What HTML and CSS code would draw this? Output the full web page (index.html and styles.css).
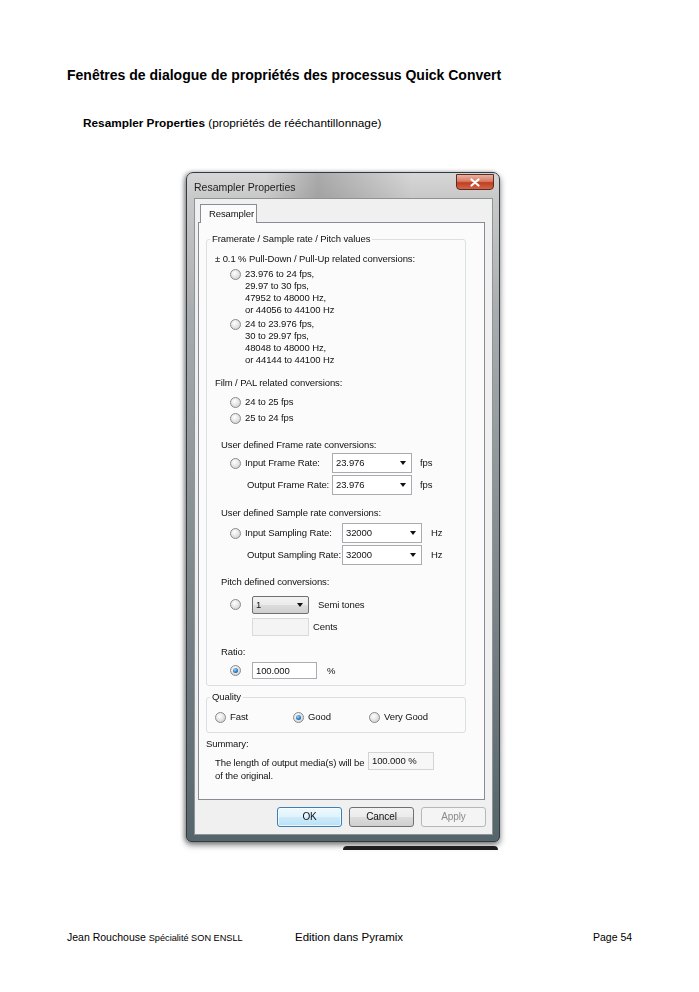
FILE: index.html
```html
<!DOCTYPE html>
<html lang="fr">
<head>
	<meta charset="UTF-8">
	<meta name="viewport" content="width=device-width, initial-scale=1.0">
	<title>Edition dans Pyramix - Page 54</title>
	<link rel="stylesheet" href="styles.css">
</head>
<body>
<div class="page">
	<h1 class="doc-title">Fenêtres de dialogue de propriétés des processus Quick Convert</h1>
	<p class="doc-sub"><b>Resampler Properties</b> (propriétés de rééchantillonnage)</p>

	<div class="shot">
		<div class="win">
			<div class="win-title">
				<span class="win-caption">Resampler Properties</span>
				<span class="win-close">
					<svg width="12" height="9" viewBox="0 0 12 9"><path d="M2.5 1.5 L9.5 7.5 M9.5 1.5 L2.5 7.5" stroke="#fff" stroke-width="2.2" stroke-linecap="round"/></svg>
				</span>
			</div>
			<div class="win-client">
				<div class="tabs"><span class="tab">Resampler</span></div>
				<div class="tab-panel">
					<fieldset class="group group-main">
						<legend>Framerate / Sample rate / Pitch values</legend>

						<div class="sub-head sh-pd">± 0.1 % Pull-Down / Pull-Up related conversions:</div>
						<div class="opt opt-multi o-first"><span class="radio"></span><span>23.976 to 24 fps,<br>29.97 to 30 fps,<br>47952 to 48000 Hz,<br>or 44056 to 44100 Hz</span></div>
						<div class="opt opt-multi o-second"><span class="radio"></span><span>24 to 23.976 fps,<br>30 to 29.97 fps,<br>48048 to 48000 Hz,<br>or 44144 to 44100 Hz</span></div>

						<div class="sub-head sh-film">Film / PAL related conversions:</div>
						<div class="opt o-film1"><span class="radio"></span>24 to 25 fps</div>
						<div class="opt o-film2"><span class="radio"></span>25 to 24 fps</div>

						<div class="sub-head indent sh-frame">User defined Frame rate conversions:</div>
						<div class="rate-row rr-in1"><span class="radio"></span><span class="lbl-frame">Input Frame Rate:</span><span class="combo">23.976</span><span class="unit">fps</span></div>
						<div class="rate-row rate-out rr-out1"><span class="lbl-frame-out">Output Frame Rate:</span><span class="combo">23.976</span><span class="unit">fps</span></div>

						<div class="sub-head indent sh-sample">User defined Sample rate conversions:</div>
						<div class="rate-row rr-in2"><span class="radio"></span><span class="lbl-rate">Input Sampling Rate:</span><span class="combo">32000</span><span class="unit unit-hz">Hz</span></div>
						<div class="rate-row rate-out rr-out2"><span class="lbl-rate-out">Output Sampling Rate:</span><span class="combo">32000</span><span class="unit unit-hz">Hz</span></div>

						<div class="sub-head indent sh-pitch">Pitch defined conversions:</div>
						<div class="pitch-row"><span class="radio"></span><span class="combo combo-btn">1</span><span class="pitch-unit">Semi tones</span></div>
						<div class="cents-row"><span class="field field-off"></span><span class="cents-unit">Cents</span></div>

						<div class="sub-head indent sh-ratio">Ratio:</div>
						<div class="ratio-row"><span class="radio checked"></span><span class="field field-ratio">100.000</span><span class="ratio-unit">%</span></div>
					</fieldset>

					<fieldset class="group group-quality">
						<legend>Quality</legend>
						<div class="quality-row">
							<span class="q-opt q-fast"><span class="radio"></span>Fast</span>
							<span class="q-opt q-good"><span class="radio checked"></span>Good</span>
							<span class="q-opt"><span class="radio"></span>Very Good</span>
						</div>
					</fieldset>

					<div class="summary-head">Summary:</div>
					<div class="summary-row">
						<div class="summary-text">The length of output media(s) will be<br>of the original.</div>
						<div class="field summary-box">100.000 %</div>
					</div>
				</div>

				<div class="buttons">
					<span class="btn btn-default">OK</span>
					<span class="btn">Cancel</span>
					<span class="btn btn-disabled">Apply</span>
				</div>
			</div>
		</div>
		<!-- top edge of the window underneath -->
		<div class="win-behind"></div>
	</div>

	<footer class="doc-foot">
		<span class="foot-author">Jean Rouchouse <small>Spécialité SON ENSLL</small></span>
		<span class="foot-title">Edition dans Pyramix</span>
		<span class="foot-page">Page 54</span>
	</footer>
</div>
</body>
</html>
```

FILE: styles.css
```css
* {
	box-sizing: border-box;
}
body {
	margin: 0;
	background: #fff;
	font-family: "Liberation Sans", Arial, sans-serif;
	color: #000;
}
.page {
	width: 699px;
}

/* document text */
.doc-title {
	margin: 67px 0 0 67px;
	font-size: 14px;
	line-height: 16px;
	font-weight: bold;
}
.doc-sub {
	margin: 33px 0 0 83px;
	font-size: 11.8px;
	line-height: 14px;
}
.doc-foot {
	display: grid;
	grid-template-columns: 228px 298px auto;
	align-items: baseline;
	margin: 80px 0 0 67px;
	line-height: 14px;
}
.foot-author {
	font-size: 10.5px;
}
.foot-author small {
	font-size: 9.2px;
}
.foot-title {
	font-size: 11.5px;
}
.foot-page {
	font-size: 10.5px;
}

/* screenshot of the dialog */
.shot {
	margin: 42px 0 0 186px;
	width: 314px;
	filter: blur(0.3px);
}
.win {
	border: 1px solid #2f3d43;
	border-radius: 7px 7px 5px 5px;
	padding: 0 6px 6px 7px;
	background:
		linear-gradient(to right, rgba(90, 90, 90, 0) 25%, rgba(90, 90, 90, 0.35) 42%, rgba(90, 90, 90, 0.2) 55%, rgba(90, 90, 90, 0) 72%) 0 0 / 100% 25px no-repeat,
		linear-gradient(#d6d6d6 0, #c9c9c9 24px, #a9acae 140px, #80888b 60%, #56656b 100%);
	box-shadow: 0 3px 6px rgba(0, 0, 0, 0.5), -2px 0 4px rgba(0, 0, 0, 0.25);
}
.win-title {
	display: flex;
	justify-content: space-between;
	height: 25px;
}
.win-caption {
	padding-top: 7px;
	font-size: 10.5px;
	line-height: 14px;
	color: #1c1c1c;
}
.win-close {
	display: flex;
	align-items: center;
	justify-content: center;
	width: 38px;
	height: 16px;
	margin: 1px -1px 0 0;
	border: 1px solid #5d2a1f;
	border-radius: 0 0 4px 4px;
	background: linear-gradient(#eab1a3 0, #d97b63 45%, #c23e22 55%, #d0654a 100%);
}
.win-client {
	background: #f0f0f0;
	border: 1px solid #8d9498;
	padding: 5px 7px 7px 3px;
	font-size: 9.5px;
	line-height: 12px;
	color: #111;
	white-space: nowrap;
	letter-spacing: -0.1px;
}

/* tab */
.tabs {
	display: flex;
	padding-left: 2px;
	position: relative;
	z-index: 1;
	margin-bottom: -1px;
}
.tab {
	width: 57px;
	height: 19px;
	padding: 3px 0 0 8px;
	border: 1px solid #898c95;
	border-bottom: none;
	background: #fbfbfb;
}
.tab-panel {
	border: 1px solid #898c95;
	background: #fbfbfb;
	padding: 10px 0 17px 7px;
}

/* group boxes */
.group {
	width: 260px;
	min-width: 0;
	margin: 0;
	padding: 0 0 5px;
	border: 1px solid #dadfe2;
	border-radius: 3px;
}
.group legend {
	margin-left: 3px;
	padding: 0 2px;
	line-height: 12px;
}
.group-quality {
	margin-top: 5px;
	padding-bottom: 9px;
}

.sub-head {
	padding-left: 8px;
}
.sub-head.indent {
	padding-left: 14px;
}
.sh-pd { margin-top: 8px; }
.sh-film { margin-top: 11px; }
.sh-frame { margin-top: 15px; }
.sh-sample { margin-top: 12px; }
.sh-pitch { margin-top: 11px; }
.sh-ratio { margin-top: 10px; }

/* radio buttons */
.radio {
	flex: none;
	position: relative;
	width: 11px;
	height: 11px;
	border: 1px solid #8a8a8a;
	border-radius: 50%;
	background: radial-gradient(circle at 40% 35%, #fff 0, #eaeaea 40%, #c8c8c8 100%);
}
.radio.checked::after {
	content: "";
	position: absolute;
	left: 2px;
	top: 2px;
	width: 5px;
	height: 5px;
	border-radius: 50%;
	background: radial-gradient(circle at 40% 35%, #9ad6ff 0, #2a7cc4 55%, #0b4a85 100%);
}

.opt {
	display: flex;
	align-items: center;
	gap: 4px;
	height: 12px;
	padding-left: 23px;
}
.opt-multi {
	align-items: flex-start;
	height: auto;
}
.opt-multi .radio {
	margin-top: 1px;
}
.o-first { margin-top: 3px; }
.o-second { margin-top: 2px; }
.o-film1 { margin-top: 7px; }
.o-film2 { margin-top: 4px; }

/* frame rate / sample rate rows */
.rate-row {
	display: flex;
	align-items: center;
	height: 20px;
	padding-left: 23px;
}
.rate-row .radio {
	margin-right: 4px;
}
.rate-out {
	padding-left: 40px;
}
.rr-in1 { margin-top: 2px; }
.rr-out1 { margin-top: 2px; }
.rr-in2 { margin-top: 4px; }
.rr-out2 { margin-top: 2px; }
.lbl-frame { width: 87px; }
.lbl-frame-out { width: 85px; }
.lbl-rate { width: 97px; }
.lbl-rate-out { width: 95px; }
.unit {
	margin-left: 8px;
}
.unit-hz {
	margin-left: 9px;
}

.combo {
	flex: none;
	display: flex;
	align-items: center;
	width: 80px;
	height: 20px;
	padding-left: 3px;
	border: 1px solid #a9abb0;
	background: #fff;
}
.combo::after {
	content: "";
	margin: 0 5px 0 auto;
	border-left: 3.5px solid transparent;
	border-right: 3.5px solid transparent;
	border-top: 4px solid #111;
}
.combo-btn {
	width: 57px;
	height: 18px;
	border-color: #707070;
	border-radius: 2px;
	background: linear-gradient(#f2f2f2 0, #ebebeb 50%, #dddddd 50%, #cfcfcf 100%);
}

/* pitch / ratio rows */
.pitch-row,
.cents-row,
.ratio-row {
	display: flex;
	align-items: center;
	height: 19px;
	padding-left: 23px;
}
.pitch-row {
	margin-top: 7px;
}
.pitch-row .radio,
.ratio-row .radio {
	margin-right: 11px;
}
.pitch-unit {
	margin-left: 9px;
}
.cents-row {
	margin-top: 3px;
	padding-left: 45px;
}
.cents-unit {
	margin-left: 4px;
}
.ratio-row {
	margin-top: 3px;
}
.ratio-unit {
	margin-left: 10px;
}

.field {
	flex: none;
	display: flex;
	align-items: center;
	height: 18px;
	padding-left: 3px;
	border: 1px solid #abadb3;
	background: #fff;
}
.field-off {
	width: 57px;
	background: #f4f4f4;
	border-color: #dadada;
}
.field-ratio {
	width: 65px;
	height: 17px;
}

/* quality */
.quality-row {
	display: flex;
	align-items: center;
	height: 12px;
	margin-top: 8px;
	padding-left: 8px;
}
.q-opt {
	display: flex;
	align-items: center;
	gap: 4px;
}
.q-fast { width: 78px; }
.q-good { width: 76px; }

/* summary */
.summary-head {
	margin-top: 5px;
}
.summary-row {
	display: flex;
	margin-top: 2px;
	padding-left: 9px;
}
.summary-text {
	flex: none;
	width: 153px;
	padding-top: 4px;
	line-height: 13px;
}
.summary-box {
	width: 66px;
	background: #f7f7f7;
	border-color: #d4d4d4;
}

/* dialog buttons */
.buttons {
	display: flex;
	justify-content: flex-end;
	gap: 7px;
	margin: 7px -1px 0 0;
}
.btn {
	display: flex;
	align-items: center;
	justify-content: center;
	width: 65px;
	height: 20px;
	border: 1px solid #707070;
	border-radius: 3px;
	background: linear-gradient(#f2f2f2 0, #ebebeb 50%, #dddddd 50%, #cfcfcf 100%);
	font-size: 10px;
}
.btn-default {
	border-color: #3c7fb1;
	background: linear-gradient(#eef8fe 0, #e0f3fd 50%, #cdebfb 50%, #b9e1f7 100%);
	box-shadow: inset 0 0 0 1px rgba(255, 255, 255, 0.7);
}
.btn-disabled {
	border-color: #b5b8ba;
	background: #f4f4f4;
	color: #8a8a8a;
}

.win-behind {
	width: 155px;
	height: 4px;
	margin: 4px 0 0 157px;
	border-radius: 4px 4px 0 0;
	background: #1e1e1e;
}
```
